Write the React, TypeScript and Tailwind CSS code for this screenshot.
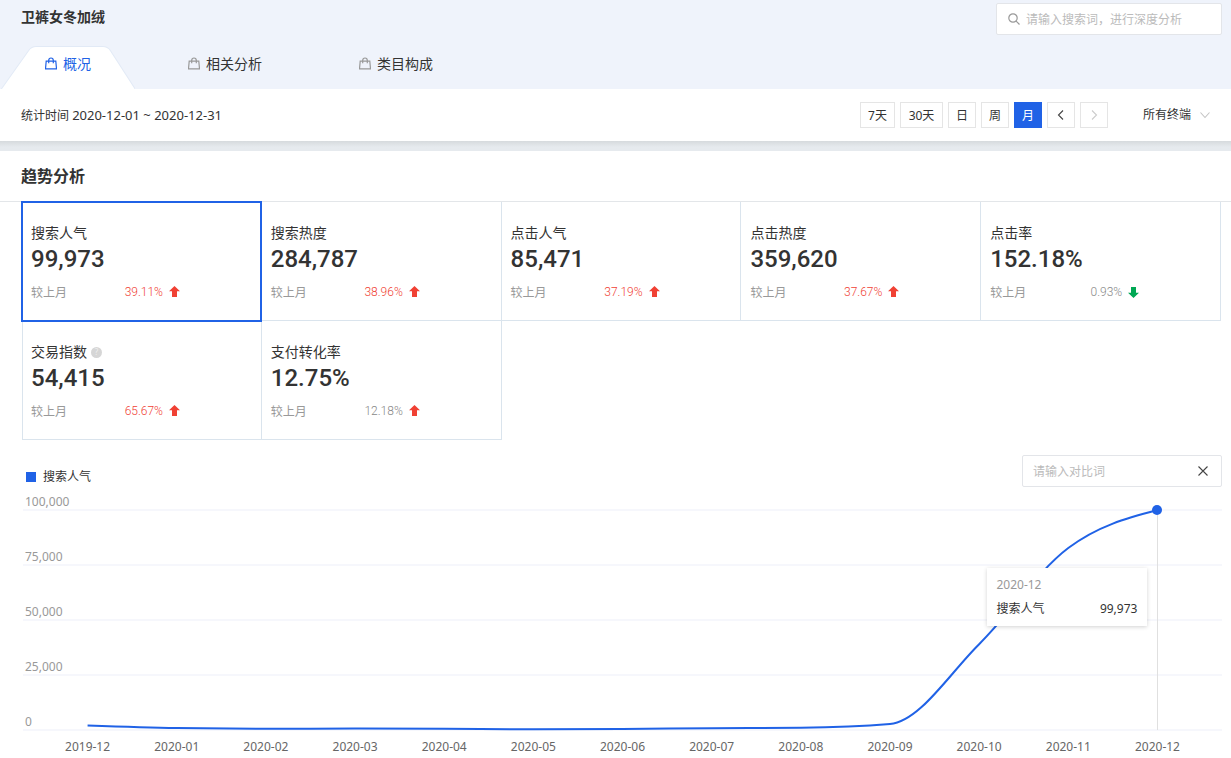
import { useState } from 'react'
import clsx from 'clsx'

type Metric = {
  label: string
  value: string
  change: string
  direction: 'up' | 'down'
  muted?: boolean
  hint?: boolean
}

const tabs = ['概况', '相关分析', '类目构成']

const ranges = [
  { label: '7天', width: 'w-[35px]' },
  { label: '30天', width: 'w-[43px]' },
  { label: '日', width: 'w-7' },
  { label: '周', width: 'w-7' },
  { label: '月', width: 'w-7' },
]

const metrics: Metric[] = [
  { label: '搜索人气', value: '99,973', change: '39.11%', direction: 'up' },
  { label: '搜索热度', value: '284,787', change: '38.96%', direction: 'up' },
  { label: '点击人气', value: '85,471', change: '37.19%', direction: 'up' },
  { label: '点击热度', value: '359,620', change: '37.67%', direction: 'up' },
  { label: '点击率', value: '152.18%', change: '0.93%', direction: 'down', muted: true },
  { label: '交易指数', value: '54,415', change: '65.67%', direction: 'up', hint: true },
  { label: '支付转化率', value: '12.75%', change: '12.18%', direction: 'up', muted: true },
]

const series = [
  { month: '2019-12', value: 2100 },
  { month: '2020-01', value: 900 },
  { month: '2020-02', value: 550 },
  { month: '2020-03', value: 650 },
  { month: '2020-04', value: 550 },
  { month: '2020-05', value: 300 },
  { month: '2020-06', value: 450 },
  { month: '2020-07', value: 800 },
  { month: '2020-08', value: 1000 },
  { month: '2020-09', value: 2700 },
  { month: '2020-10', value: 39000 },
  { month: '2020-11', value: 82700 },
  { month: '2020-12', value: 99973 },
]

const MAX = 100000
const STEP = 100
const PLOT_W = series.length * STEP
const PLOT_H = 220

// Monotone cubic curve, so the line never dips below its neighbours
function linePath() {
  const ys = series.map((d) => PLOT_H - (d.value / MAX) * PLOT_H)
  const slopes = ys.slice(1).map((y, i) => y - ys[i])
  const last = ys.length - 1
  const tangents = ys.map((_, i) => {
    if (i === 0 || i === last) return 0
    const a = slopes[i - 1]
    const b = slopes[i]
    if (a * b <= 0) return 0
    return Math.sign(a) * 2 * Math.min(Math.abs(a), Math.abs(b), Math.abs(a + b) / 4)
  })
  tangents[0] = (3 * slopes[0] - tangents[1]) / 2
  tangents[last] = (3 * slopes[last - 1] - tangents[last - 1]) / 2

  const x = (i: number) => (i + 0.5) * STEP
  let d = `M${x(0)},${ys[0]}`
  for (let i = 1; i <= last; i++) {
    d += `C${x(i - 1) + STEP / 3},${ys[i - 1] + tangents[i - 1] / 3} ${x(i) - STEP / 3},${ys[i] - tangents[i] / 3} ${x(i)},${ys[i]}`
  }
  return d
}

function BagIcon({ className }: { className?: string }) {
  return (
    <svg className={className} width="12" height="13" viewBox="0 0 12 13" fill="none" stroke="currentColor" strokeWidth="1.2" aria-hidden="true">
      <path d="M1.2 4.2h9.6l.7 7.6H.5z" />
      <path d="M3.7 6.3V3.6C3.7 2 4.6 1 6 1s2.3 1 2.3 2.6v2.7" />
    </svg>
  )
}

function ChangeArrow({ direction }: { direction: 'up' | 'down' }) {
  return (
    <svg
      className={clsx('ml-1.5 shrink-0', direction === 'up' ? 'text-[#f04134]' : 'rotate-180 text-[#00a854]')}
      width="11"
      height="12"
      viewBox="0 0 11 12"
      fill="currentColor"
      aria-hidden="true"
    >
      <path d="M5.5 0 11 5.2H8V11H3V5.2H0z" />
    </svg>
  )
}

function Chevron({ d, className }: { d: string; className?: string }) {
  return (
    <svg className={className} width="12" height="12" viewBox="0 0 12 12" fill="none" stroke="currentColor" strokeWidth="1.1" aria-hidden="true">
      <path d={d} />
    </svg>
  )
}

function Header({ active, onChange }: { active: string; onChange: (tab: string) => void }) {
  return (
    <header className="bg-[#eff3fb] pt-[3px]">
      <div className="flex items-start justify-between pr-[9px] pl-[21px]">
        <h1 className="text-sm leading-7 font-bold text-[#333]">卫裤女冬加绒</h1>
        <label className="flex h-8 w-[226px] items-center rounded-xs border border-[#e3e5e9] bg-white pr-2 pl-[11px]">
          <svg className="mr-1.5 shrink-0 text-[#999]" width="12" height="12" viewBox="0 0 12 12" fill="none" stroke="currentColor" strokeWidth="1.2" aria-hidden="true">
            <circle cx="5" cy="5" r="4.2" />
            <path d="m8.1 8.1 3.4 3.4" />
          </svg>
          <input
            className="w-full min-w-0 bg-transparent pt-0.5 text-xs text-[#333] outline-none placeholder:text-[#bbb]"
            aria-label="搜索词"
            placeholder="请输入搜索词，进行深度分析"
          />
        </label>
      </div>

      <nav className="mt-[11px] flex gap-[9px] pl-px">
        {tabs.map((tab) => (
          <button
            key={tab}
            type="button"
            onClick={() => onChange(tab)}
            className={clsx(
              'relative flex h-[43px] items-center px-11 pb-2 text-sm',
              tab === active ? 'text-[#2062e6]' : 'text-[#333]',
            )}
          >
            {tab === active && (
              <svg className="absolute inset-0 size-full" viewBox="0 0 133 43" preserveAspectRatio="none" fill="#fff" stroke="#e2eaf6" aria-hidden="true">
                <path d="M0 43.5 27.5 4.5Q30 .5 35 .5H101Q106 .5 108.5 4.5L133.5 43.5" />
              </svg>
            )}
            <BagIcon className={clsx('relative mr-[6px]', tab !== active && 'text-[#999]')} />
            <span className="relative">{tab}</span>
          </button>
        ))}
      </nav>
    </header>
  )
}

function FilterBar() {
  const [range, setRange] = useState('月')

  return (
    <div className="flex h-[52px] items-center justify-between bg-white pr-5 pl-[21px] text-xs text-[#333]">
      <p className="pt-0.5">
        统计时间 <span className="text-[13px]">2020-12-01 ~ 2020-12-31</span>
      </p>
      <div className="flex items-center gap-[5px]">
        {ranges.map(({ label, width }) => (
          <button
            key={label}
            type="button"
            onClick={() => setRange(label)}
            className={clsx(
              'h-[26px] border pt-0.5',
              width,
              label === range ? 'border-[#2062e6] bg-[#2062e6] text-white' : 'border-[#e5e5e5]',
            )}
          >
            {label}
          </button>
        ))}
        <button type="button" aria-label="上一月" className="grid h-[26px] w-7 place-items-center border border-[#e5e5e5] text-[#444]">
          <Chevron d="M8 1.5 3.5 6 8 10.5" />
        </button>
        <button type="button" aria-label="下一月" disabled className="grid h-[26px] w-7 place-items-center border border-[#e5e5e5] text-[#ccc]">
          <Chevron d="M4 1.5 8.5 6 4 10.5" />
        </button>
        <div className="relative ml-[30px]">
          <select aria-label="终端" className="h-[26px] w-[68px] appearance-none bg-transparent outline-none">
            <option>所有终端</option>
          </select>
          <Chevron d="M1.5 3.5 6 8.5 10.5 3.5" className="pointer-events-none absolute top-[7px] right-0 text-[#c4c4c4]" />
        </div>
      </div>
    </div>
  )
}

function MetricCard({ metric, selected, first, onSelect }: { metric: Metric; selected: boolean; first: boolean; onSelect: () => void }) {
  return (
    <button
      type="button"
      onClick={onSelect}
      className={clsx(
        'border-r border-b border-[#dae4ed] pt-5 pb-[18px] text-left',
        first ? 'border-l pl-2' : 'pl-[9px]',
        selected && 'relative mr-px outline-2 -outline-offset-1 outline-[#2062e6]',
      )}
    >
      <span className="flex h-[22px] items-center gap-1 text-sm text-[#333]">
        {metric.label}
        {metric.hint && (
          <span className="grid size-[11px] place-items-center rounded-full bg-[#d6d6d6] text-[8px] leading-none text-[#eee]">?</span>
        )}
      </span>
      <span className="block h-[30px] font-[Roboto] text-2xl leading-[30px] font-medium text-[#333]">{metric.value}</span>
      <span className="mt-2 flex h-5 items-center text-xs">
        <span className="flex w-[132px] items-center justify-between text-[#999]">
          <span className="pt-0.5">较上月</span>
          <span className={clsx('font-[Roboto] font-light', metric.muted ? 'text-[#888]' : 'text-[#f04134]')}>{metric.change}</span>
        </span>
        <ChangeArrow direction={metric.direction} />
      </span>
    </button>
  )
}

function TrendChart() {
  const lastX = ((series.length - 0.5) / series.length) * 100
  const last = series[series.length - 1]

  return (
    <div className="mr-[9px] ml-[23px] text-xs">
      <div className="relative">
        {['100,000', '75,000', '50,000', '25,000', '0'].map((tick, i) => (
          <div key={tick} className={clsx('flex items-end border-b-2 border-[#f6f7fc] pl-0.5 leading-[14px] text-[#999]', i === 0 ? 'h-6' : 'h-[55px]')}>
            {tick}
          </div>
        ))}

        <div className="absolute inset-x-5 top-[23px] bottom-px">
          <div className="absolute inset-y-0 w-px bg-[#e0e0e0]" style={{ left: `${lastX}%` }} />
          <svg className="absolute inset-0 size-full overflow-visible" viewBox={`0 0 ${PLOT_W} ${PLOT_H}`} preserveAspectRatio="none" aria-hidden="true">
            <path d={linePath()} fill="none" stroke="#2062e6" strokeWidth="2" vectorEffect="non-scaling-stroke" />
          </svg>
          <span className="absolute -top-[5px] size-[10px] -translate-x-1/2 rounded-full bg-[#2062e6]" style={{ left: `${lastX}%` }} />
          <div
            className="absolute top-[58px] w-40 bg-white py-[5px] pr-[10px] pl-[9px] leading-6 shadow-[0_1px_4px_rgba(0,0,0,0.18)]"
            style={{ right: `calc(${100 - lastX}% + 10px)` }}
          >
            <p className="text-[#999]">{last.month}</p>
            <p className="flex justify-between text-[#333]">
              <span>搜索人气</span>
              <span>99,973</span>
            </p>
          </div>
        </div>
      </div>

      <div className="flex px-5 pt-2 text-center leading-4 text-[#666]">
        {series.map((d) => (
          <span key={d.month} className="flex-1">
            {d.month}
          </span>
        ))}
      </div>
    </div>
  )
}

export default function App() {
  const [tab, setTab] = useState(tabs[0])
  const [selected, setSelected] = useState(metrics[0].label)

  return (
    <div className="min-w-[900px] bg-white font-['Noto_Sans','Noto_Sans_CJK_SC',sans-serif]">
      <Header active={tab} onChange={setTab} />
      <FilterBar />
      <div className="h-[10px] bg-linear-to-b from-[#d6dadd] to-[#e6eaee] to-60%" />

      <main>
        <h2 className="border-b border-[#e3e6e9] pl-[21px] text-base leading-[50px] font-bold text-[#333]">趋势分析</h2>
        <div className="mr-[10px] ml-[22px] grid grid-cols-5">
          {metrics.map((metric, i) => (
            <MetricCard
              key={metric.label}
              metric={metric}
              first={i % 5 === 0}
              selected={metric.label === selected}
              onSelect={() => setSelected(metric.label)}
            />
          ))}
        </div>

        <div className="mt-[15px] mr-[9px] ml-[26px] flex items-end justify-between text-xs">
          <div className="flex items-center gap-[7px] leading-5 text-[#333]">
            <span className="size-[10px] bg-[#2062e6]" />
            {selected}
          </div>
          <div className="flex h-8 w-[200px] items-center rounded-xs border border-[#e3e5e9] pr-3 pl-[10px]">
            <input
              className="w-full min-w-0 bg-transparent pt-0.5 text-[#333] outline-none placeholder:text-[#bbb]"
              aria-label="对比词"
              placeholder="请输入对比词"
            />
            <button type="button" aria-label="清除" className="shrink-0 text-[#444]">
              <Chevron d="m1.5 1.5 9 9m0-9-9 9" />
            </button>
          </div>
        </div>
        <TrendChart />
      </main>
    </div>
  )
}
